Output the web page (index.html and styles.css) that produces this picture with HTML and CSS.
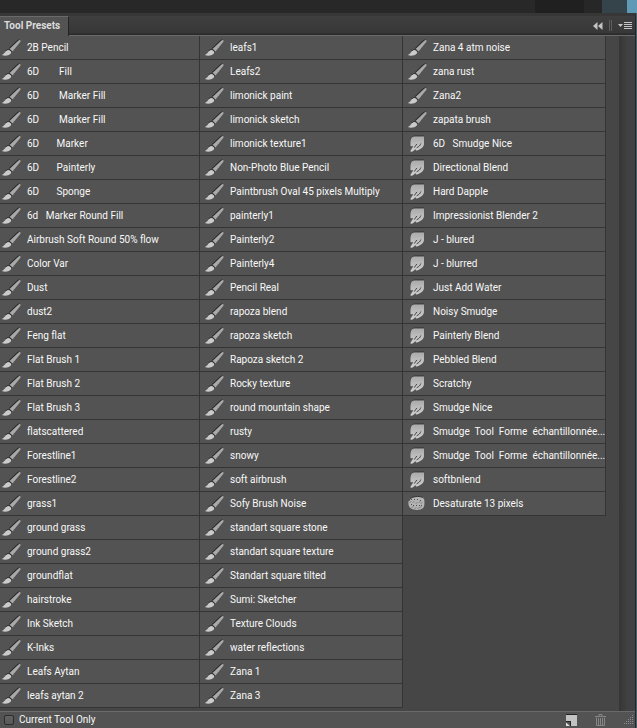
FILE: index.html
```html
<!DOCTYPE html>
<html lang="en">
<head>
<meta charset="utf-8">
<title>Tool Presets</title>
<link rel="stylesheet" href="styles.css">
</head>
<body>
<svg class="defs" aria-hidden="true">
  <defs>
    <linearGradient id="metal" x1="0" y1="0" x2="0" y2="1"><stop offset="0" stop-color="#a9a9a9"/><stop offset="1" stop-color="#d2d2d2"/></linearGradient>
    <symbol id="brush" viewBox="0 0 20 18">
      <path d="M8.500 9.500 16.500 1.700l2.300-1" stroke="#2c2c2c" stroke-width="1.200" fill="none"/>
      <path d="M19.300 1.300c.5.500.3 1.200-.1 1.700L11.500 12.400 8.800 9.800l8.500-8c.7-.6 1.500-1.100 2-.5z" fill="#a9a9a9"/>
      <path d="M8.300 10.400l2.600 2.400" stroke="#333" stroke-width="1"/>
      <path d="M5 12c1-1.200 2.600-1.500 3.900-.6 1.600 1.100 1.600 2.600.4 3.700-2 1.800-5.800 1.900-8.500.9C3 15.300 3.600 13.500 5 12z" fill="#cacaca"/>
      <path d="M4.500 12c1-1.300 2.500-1.900 4-1.300" stroke="#303030" stroke-width="1" fill="none"/>
    </symbol>
    <symbol id="smudge" viewBox="0 0 20 18">
      <path d="M3.500 6C4 3 5 1.300 7.500 1H17" stroke="#333" stroke-width="1" fill="none"/>
      <path d="M7.500 1.500H17V9c0 1.500-.8 2.800-2 3.800-1.800 1.500-4.500 3-5.800 2.600-.9-.4-.6-1.200 0-1.900L6 16.300c-1 .8-2.500.6-2.500-.4 0-.6.5-1.300 1-2l1.800-2.700c-1.300.2-2.600.3-2.800-.8V6c.2-2.700 1.500-4.500 4-4.500z" fill="url(#metal)"/>
      <path d="M9.800 9 7.300 12.600M13.800 8.500c-.2 1.800-2.200 3.200-4.200 4.500" stroke="#484848" stroke-width="1" fill="none"/>
    </symbol>
    <symbol id="sponge" viewBox="0 0 20 18">
      <path d="M5 2.500C8 1 14.500 1 16.300 2.600c1.500 1.500 1.500 8.200.2 10-1.800 2.600-9 3-12 1.200C1.500 12 1 8.500 1.600 6 2 4.200 3.300 3.300 5 2.500z" fill="#b4b4b4"/>
      <path d="M1.800 6C2.500 3.500 5 2.200 8 1.700s7.500-.2 8.500 1.500" stroke="#333" fill="none"/>
      <path d="M4 5l1-1m2 1 1-1m2 1 1-1m2 1 1 1M3 7.500l1-1m2 1 1-1m2 2 1-1m2 0 1-1m1 2 1-1M4 10l1-1m1 2 1-1m2 1 1-1m2 1 1-1m1 1 1-1M5 12.500l1-1m2 2 1-1m2 1 1-1m1 0 1-1" stroke="#505050" stroke-width="1" fill="none"/>
    </symbol>
  </defs>
</svg>
<div class="window">
  <div class="backdrop"><span class="shade"></span><span class="shade mid"></span><span class="shade teal"></span><span class="shade sky"></span></div>
  <main class="panel">
    <header class="tabs">
      <h1 class="tab">Tool Presets</h1>
      <div class="actions">
        <button class="tool" aria-label="Collapse panel"><svg width="10" height="8" viewBox="0 0 10 8"><path d="M4.500 0v8L0 4zM9.500 0v8L5 4z" fill="#c4c4c4"/></svg></button>
        <span class="grip"></span>
        <button class="tool" aria-label="Panel menu"><svg width="14" height="9" viewBox="0 0 14 9"><path d="M0 3h5L2.500 6z" fill="#c4c4c4"/><path d="M6 1.500h8M6 3.500h8M6 5.500h8M6 7.500h8" stroke="#c4c4c4"/></svg></button>
      </div>
    </header>
    <div class="content">
      <div class="presets">
        <ul class="column first">
          <li><svg><use href="#brush"/></svg><span>2B Pencil</span></li>
          <li><svg><use href="#brush"/></svg><span>6D        Fill</span></li>
          <li><svg><use href="#brush"/></svg><span>6D        Marker Fill</span></li>
          <li><svg><use href="#brush"/></svg><span>6D        Marker Fill</span></li>
          <li><svg><use href="#brush"/></svg><span>6D       Marker</span></li>
          <li><svg><use href="#brush"/></svg><span>6D       Painterly</span></li>
          <li><svg><use href="#brush"/></svg><span>6D       Sponge</span></li>
          <li><svg><use href="#brush"/></svg><span>6d   Marker Round Fill</span></li>
          <li><svg><use href="#brush"/></svg><span>Airbrush Soft Round 50% flow</span></li>
          <li><svg><use href="#brush"/></svg><span>Color Var</span></li>
          <li><svg><use href="#brush"/></svg><span>Dust</span></li>
          <li><svg><use href="#brush"/></svg><span>dust2</span></li>
          <li><svg><use href="#brush"/></svg><span>Feng flat</span></li>
          <li><svg><use href="#brush"/></svg><span>Flat Brush 1</span></li>
          <li><svg><use href="#brush"/></svg><span>Flat Brush 2</span></li>
          <li><svg><use href="#brush"/></svg><span>Flat Brush 3</span></li>
          <li><svg><use href="#brush"/></svg><span>flatscattered</span></li>
          <li><svg><use href="#brush"/></svg><span>Forestline1</span></li>
          <li><svg><use href="#brush"/></svg><span>Forestline2</span></li>
          <li><svg><use href="#brush"/></svg><span>grass1</span></li>
          <li><svg><use href="#brush"/></svg><span>ground grass</span></li>
          <li><svg><use href="#brush"/></svg><span>ground grass2</span></li>
          <li><svg><use href="#brush"/></svg><span>groundflat</span></li>
          <li><svg><use href="#brush"/></svg><span>hairstroke</span></li>
          <li><svg><use href="#brush"/></svg><span>Ink Sketch</span></li>
          <li><svg><use href="#brush"/></svg><span>K-Inks</span></li>
          <li><svg><use href="#brush"/></svg><span>Leafs Aytan</span></li>
          <li><svg><use href="#brush"/></svg><span>leafs aytan 2</span></li>
        </ul>
        <ul class="column">
          <li><svg><use href="#brush"/></svg><span>leafs1</span></li>
          <li><svg><use href="#brush"/></svg><span>Leafs2</span></li>
          <li><svg><use href="#brush"/></svg><span>limonick paint</span></li>
          <li><svg><use href="#brush"/></svg><span>limonick sketch</span></li>
          <li><svg><use href="#brush"/></svg><span>limonick texture1</span></li>
          <li><svg><use href="#brush"/></svg><span>Non-Photo Blue Pencil</span></li>
          <li><svg><use href="#brush"/></svg><span>Paintbrush Oval 45 pixels Multiply</span></li>
          <li><svg><use href="#brush"/></svg><span>painterly1</span></li>
          <li><svg><use href="#brush"/></svg><span>Painterly2</span></li>
          <li><svg><use href="#brush"/></svg><span>Painterly4</span></li>
          <li><svg><use href="#brush"/></svg><span>Pencil Real</span></li>
          <li><svg><use href="#brush"/></svg><span>rapoza blend</span></li>
          <li><svg><use href="#brush"/></svg><span>rapoza sketch</span></li>
          <li><svg><use href="#brush"/></svg><span>Rapoza sketch 2</span></li>
          <li><svg><use href="#brush"/></svg><span>Rocky texture</span></li>
          <li><svg><use href="#brush"/></svg><span>round mountain shape</span></li>
          <li><svg><use href="#brush"/></svg><span>rusty</span></li>
          <li><svg><use href="#brush"/></svg><span>snowy</span></li>
          <li><svg><use href="#brush"/></svg><span>soft airbrush</span></li>
          <li><svg><use href="#brush"/></svg><span>Sofy Brush Noise</span></li>
          <li><svg><use href="#brush"/></svg><span>standart square stone</span></li>
          <li><svg><use href="#brush"/></svg><span>standart square texture</span></li>
          <li><svg><use href="#brush"/></svg><span>Standart square tilted</span></li>
          <li><svg><use href="#brush"/></svg><span>Sumi: Sketcher</span></li>
          <li><svg><use href="#brush"/></svg><span>Texture Clouds</span></li>
          <li><svg><use href="#brush"/></svg><span>water reflections</span></li>
          <li><svg><use href="#brush"/></svg><span>Zana 1</span></li>
          <li><svg><use href="#brush"/></svg><span>Zana 3</span></li>
        </ul>
        <ul class="column">
          <li><svg><use href="#brush"/></svg><span>Zana 4 atm noise</span></li>
          <li><svg><use href="#brush"/></svg><span>zana rust</span></li>
          <li><svg><use href="#brush"/></svg><span>Zana2</span></li>
          <li><svg><use href="#brush"/></svg><span>zapata brush</span></li>
          <li><svg><use href="#smudge"/></svg><span>6D   Smudge Nice</span></li>
          <li><svg><use href="#smudge"/></svg><span>Directional Blend</span></li>
          <li><svg><use href="#smudge"/></svg><span>Hard Dapple</span></li>
          <li><svg><use href="#smudge"/></svg><span>Impressionist Blender 2</span></li>
          <li><svg><use href="#smudge"/></svg><span>J - blured</span></li>
          <li><svg><use href="#smudge"/></svg><span>J - blurred</span></li>
          <li><svg><use href="#smudge"/></svg><span>Just Add Water</span></li>
          <li><svg><use href="#smudge"/></svg><span>Noisy Smudge</span></li>
          <li><svg><use href="#smudge"/></svg><span>Painterly Blend</span></li>
          <li><svg><use href="#smudge"/></svg><span>Pebbled Blend</span></li>
          <li><svg><use href="#smudge"/></svg><span>Scratchy</span></li>
          <li><svg><use href="#smudge"/></svg><span>Smudge Nice</span></li>
          <li><svg><use href="#smudge"/></svg><span>Smudge  Tool  Forme  échantillonnée...</span></li>
          <li><svg><use href="#smudge"/></svg><span>Smudge  Tool  Forme  échantillonnée...</span></li>
          <li><svg><use href="#smudge"/></svg><span>softbnlend</span></li>
          <li><svg><use href="#sponge"/></svg><span>Desaturate 13 pixels</span></li>
        </ul>
      </div>
      <div class="scrollbar"></div>
    </div>
    <footer class="status">
      <label class="only"><input type="checkbox">Current Tool Only</label>
      <div class="commands">
        <button class="tool" aria-label="New preset"><svg width="11" height="12" viewBox="0 0 11 12"><path d="M0 0h11v12H5V7H0z" fill="#c2c2c2"/><path d="M0 .5h11" stroke="#222"/><path d="M0 7.500h4.500V12" stroke="#222" fill="none"/><path d="M0 8.500 4 12H0z" fill="#dedede"/></svg></button>
        <button class="tool" aria-label="Delete preset"><svg width="11" height="12" viewBox="0 0 11 12" fill="none" stroke="#858585"><path d="M0 2.500h11M4 2V.5h3V2M1.500 3.500v8h8v-8M3.500 4v7M5.500 4v7M7.500 4v7"/></svg></button>
        <svg class="resize" width="10" height="10" viewBox="0 0 10 10"><path d="M8 .5h1M6 2.500h1M8 2.500h1M4 4.500h1M6 4.500h1M8 4.500h1M2 6.500h1M4 6.500h1M6 6.500h1M8 6.500h1M0 8.500h1M2 8.500h1M4 8.500h1M6 8.500h1M8 8.500h1" stroke="#8c8c8c"/></svg>
      </div>
    </footer>
  </main>
</div>
</body>
</html>
```
FILE: styles.css
```css
* { box-sizing: border-box; }

body {
  margin: 0;
  background: #282828;
  color: #f8f8f8;
  font: 10px/14px Roboto, "Noto Sans", sans-serif;
}

.defs {
  position: absolute;
  width: 0;
  height: 0;
}

.window {
  display: flex;
  flex-direction: column;
  min-height: 100vh;
}

.backdrop {
  display: flex;
  justify-content: flex-end;
  height: 13px;
}

.shade { width: 49px; background: #202020; }
.shade.mid { width: 18px; background: #272727; }
.shade.teal { width: 25px; background: #35434a; }
.shade.sky { width: 10px; background: #5e9ab5; }

.panel {
  display: flex;
  flex-direction: column;
  flex: 1;
  border-top: 3px solid #373737;
  border-right: 1px solid #262626;
  margin-right: 1px;
  background: #464646;
  box-shadow: 1px 0 #48626b;
}

.tabs {
  display: flex;
  justify-content: space-between;
  height: 20px;
  border-bottom: 1px solid #6a6a6a;
  background: linear-gradient(#3f3f3f, #373737 17px, #2a2a2a 18px);
}

.tab {
  height: 20px;
  margin: 0;
  padding: 2px 8px 0 4px;
  border-top: 1px solid #6a6a6a;
  border-right: 1px solid #242424;
  background: #535353;
  color: #dcdcdc;
  font-size: 10px;
  line-height: 14px;
}

.actions {
  display: flex;
  align-items: center;
  gap: 6px;
  padding-right: 3px;
}

.tool {
  display: flex;
  padding: 0;
  border: 0;
  background: none;
}

.grip {
  width: 3px;
  height: 11px;
  border: solid #5c5c5c;
  border-width: 0 1px;
}

.content {
  display: flex;
  flex: 1;
}

.presets {
  display: grid;
  grid-template-columns: 200fr 203fr 203fr;
  flex: 1;
  align-items: start;
  padding-right: 13px;
}

.column {
  min-width: 0;
  margin: 0;
  padding: 0;
  list-style: none;
}

.column li {
  display: flex;
  align-items: center;
  gap: 6px;
  height: 24px;
  padding-left: 4px;
  border-right: 1px solid #343434;
  border-bottom: 1px solid #343434;
  background: #535353;
  white-space: pre;
}

.column.first li { padding-left: 1px; }

.column svg {
  flex: none;
  width: 20px;
  height: 18px;
}

.scrollbar {
  width: 16px;
  background: linear-gradient(90deg, #363636, #404040 8px, #434343);
}

.status {
  display: flex;
  justify-content: space-between;
  align-items: center;
  height: 17px;
  border-top: 1px solid #6a6a6a;
  background: #535353;
}

.only {
  display: flex;
  align-items: center;
  gap: 5px;
  padding-left: 4px;
}

.only input {
  width: 10px;
  height: 10px;
  margin: 0;
  border: 1px solid #2c2c2c;
  border-radius: 2px;
  background: linear-gradient(#636363, #575757);
  appearance: none;
}

.commands {
  display: flex;
  align-items: center;
  gap: 18px;
  padding-right: 1px;
}
```
